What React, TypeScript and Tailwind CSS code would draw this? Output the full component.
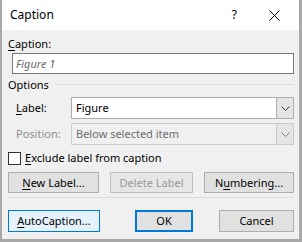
import React from 'react'

const font = { fontFamily: '"Segoe UI", "Noto Sans", sans-serif' }

function Chevron({ color }: { color: string }) {
  return (
    <svg width="9" height="5" viewBox="0 0 9 5">
      <path d="M0.5 0.5 L4.5 4.5 L8.5 0.5" fill="none" stroke={color} strokeWidth="1" />
    </svg>
  )
}

function Combo({ value, disabled }: { value: string; disabled?: boolean }) {
  return (
    <div
      className={`ml-auto flex h-[22px] w-[223px] border ${
        disabled ? 'border-[#cccccc] bg-[#f0f0f0] text-[#6d6d6d]' : 'border-[#adadad] bg-white text-black'
      }`}
    >
      <div className="flex flex-1 items-center pl-[4px]">{value}</div>
      <div
        className={`flex w-[17px] items-center justify-center border-l ${
          disabled ? 'border-[#cccccc] bg-[#e5e5e5]' : 'border-[#adadad] bg-[#e5e5e5]'
        }`}
      >
        <Chevron color={disabled ? '#7a7a7a' : '#404040'} />
      </div>
    </div>
  )
}

function Btn({
  children,
  w,
  kind = 'normal',
  ml = '',
}: {
  children: React.ReactNode
  w: string
  kind?: 'normal' | 'disabled' | 'hover' | 'default'
  ml?: string
}) {
  const styles = {
    normal: 'border border-[#adadad] bg-[#e1e1e1] text-black',
    disabled: 'border border-[#bfbfbf] bg-[#e6e6e6] text-[#9a9a9a]',
    hover: 'border border-[#0078d7] bg-[#e5f1fb] text-black',
    default: 'border-2 border-[#0078d7] bg-[#e1e1e1] text-black',
  }
  return (
    <div className={`flex h-full items-center justify-center ${w} ${ml} ${styles[kind]}`}>{children}</div>
  )
}

export default function App() {
  return (
    <div className="h-[242px] w-[302px] overflow-hidden text-[11px] leading-[16px]" style={font}>
      <div className="flex h-full w-full flex-col border-b-[3px] border-l-2 border-r-[3px] border-[#a8a8a8]">
        {/* Title bar */}
        <div className="flex h-[30px] items-center bg-white pl-[8px]">
          <span className="text-[12px] text-black">Caption</span>
          <span className="ml-auto mr-[32px] text-[12px] text-black">?</span>
          <svg width="11" height="11" viewBox="0 0 11 11" className="mr-[19px]">
            <path d="M0.5 0.5 L10.5 10.5 M10.5 0.5 L0.5 10.5" stroke="#000" strokeWidth="1" />
          </svg>
        </div>

        {/* Body */}
        <div className="flex flex-1 flex-col bg-[#f0f0f0] pl-[6px] pr-[5px]">
          <div className="mt-[6px] h-[16px]">
            <span className="underline underline-offset-2">C</span>aption:
          </div>
          <div className="ml-[4px] mt-[1px] flex h-[21px] items-center border border-[#7a7a7a] bg-white pl-[3px] italic text-[#6d6d6d]">
            Figure 1
          </div>

          <div className="mt-[3px] flex h-[16px] items-center">
            <span>Options</span>
            <div className="ml-[6px] mt-[-2px] h-px flex-1 bg-[#dcdcdc]" />
          </div>

          <div className="mt-[4px] flex h-[22px] items-center pl-[8px]">
            <span>
              <span className="underline underline-offset-2">L</span>abel:
            </span>
            <Combo value="Figure" />
          </div>

          <div className="mt-[4px] flex h-[22px] items-center pl-[8px]">
            <span className="text-[#8d8d8d]">Position:</span>
            <Combo value="Below selected item" disabled />
          </div>

          <div className="mt-[5px] flex h-[16px] items-center">
            <div className="h-[13px] w-[13px] border border-[#333333] bg-white" />
            <span className="ml-[4px]">
              <span className="underline underline-offset-2">E</span>xclude label from caption
            </span>
          </div>

          <div className="mt-[6px] flex h-[21px]">
            <Btn w="w-[91px]">
              <span>
                <span className="underline underline-offset-2">N</span>ew Label...
              </span>
            </Btn>
            <Btn w="w-[83px]" ml="ml-[11px]" kind="disabled">
              Delete Label
            </Btn>
            <Btn w="w-[90px]" ml="ml-[11px]">
              <span>
                N<span className="underline underline-offset-2">u</span>mbering...
              </span>
            </Btn>
          </div>

          <div className="mt-[4px] h-px bg-[#dcdcdc]" />

          <div className="mt-[12px] flex h-[22px]">
            <Btn w="w-[92px]" kind="hover">
              <span>
                <span className="underline underline-offset-2">A</span>utoCaption...
              </span>
            </Btn>
            <Btn w="w-[58px]" ml="ml-[35px]" kind="default">
              OK
            </Btn>
            <Btn w="w-[75px]" ml="ml-[26px]">
              Cancel
            </Btn>
          </div>
        </div>
      </div>
    </div>
  )
}
